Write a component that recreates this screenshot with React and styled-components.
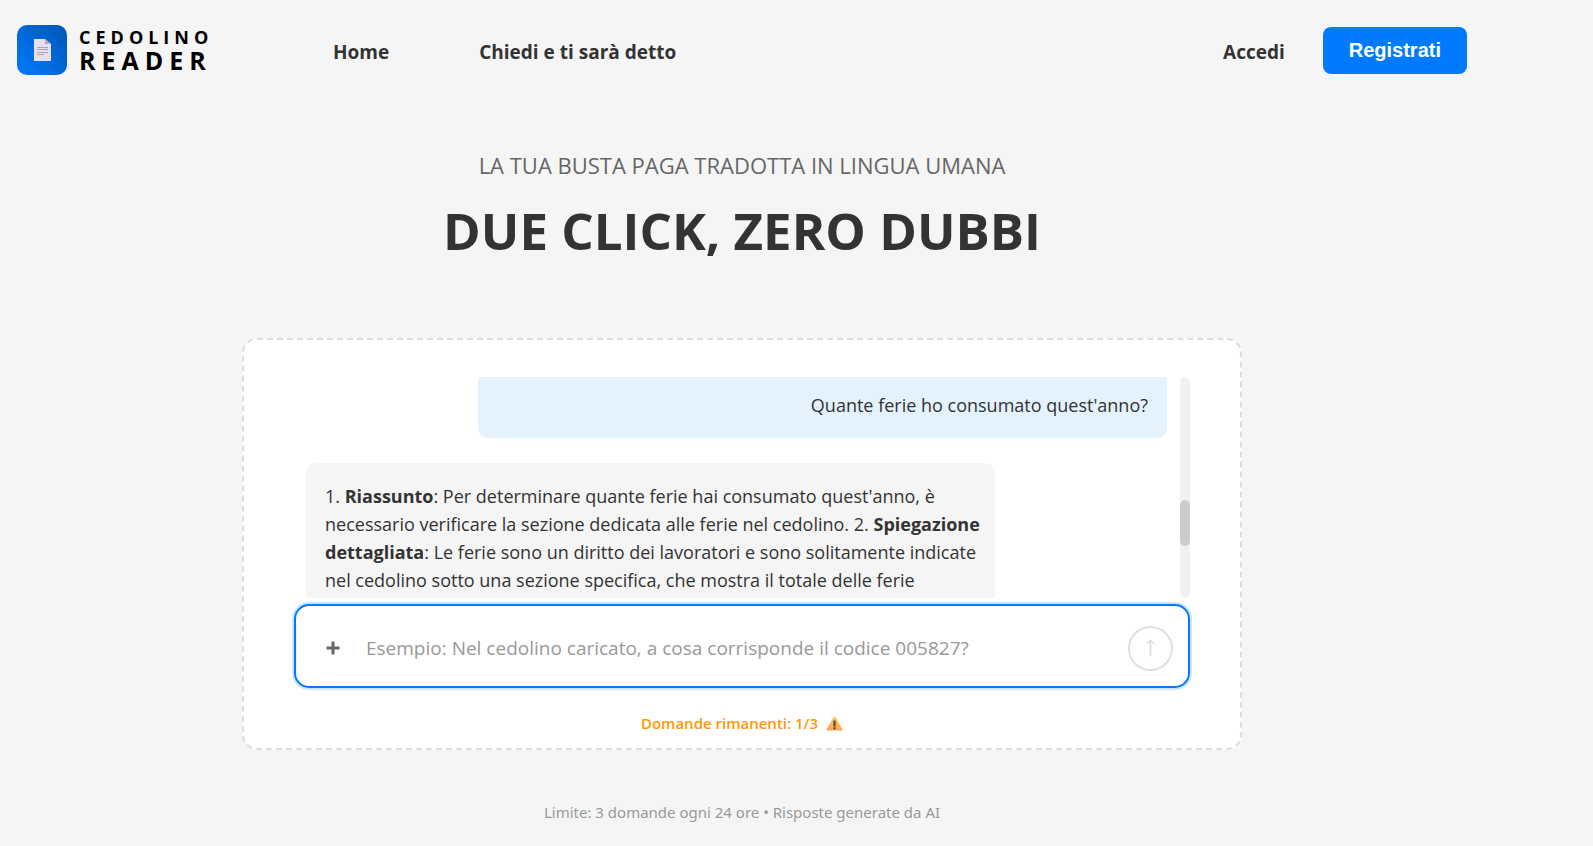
import React from "react";
import styled, { createGlobalStyle } from "styled-components";

const GlobalStyle = createGlobalStyle`
  *, *::before, *::after { box-sizing: border-box; }
  body {
    margin: 0;
    background: #f5f5f5;
    color: #333;
    font-family: "Segoe UI", "Open Sans", "Noto Sans", sans-serif;
  }
  button, input { font-family: inherit; }
`;

const Page = styled.div`
  min-height: 100vh;
  padding-right: 109px;
`;

const Header = styled.header`
  display: flex;
  align-items: center;
  padding: 25px 17px;
`;

const Brand = styled.a`
  display: flex;
  align-items: center;
  gap: 12px;
  width: 316px;
  color: #000;
  text-decoration: none;
`;

const BrandMark = styled.span`
  display: flex;
  align-items: center;
  justify-content: center;
  width: 50px;
  height: 50px;
  border-radius: 10px;
  background: linear-gradient(45deg, #007bff, #0056b3);
`;

const BrandName = styled.span`
  display: flex;
  flex-direction: column;
`;

const BrandTop = styled.span`
  font-size: 18px;
  line-height: 21px;
  font-weight: 700;
  letter-spacing: 5px;
`;

const BrandBottom = styled.span`
  font-size: 25px;
  line-height: 25px;
  font-weight: 700;
  letter-spacing: 6px;
`;

const Nav = styled.nav`
  display: flex;
  flex: 1;
  gap: 90px;
`;

const NavLink = styled.a`
  padding-top: 4px;
  color: #333;
  font-size: 19px;
  line-height: 28px;
  font-weight: 700;
  text-decoration: none;
`;

const Account = styled.div`
  display: flex;
  align-items: center;
  gap: 38px;
`;

const RegisterButton = styled.button`
  height: 47px;
  padding: 0 26px;
  border: 0;
  border-radius: 8px;
  background: #007bff;
  color: #fff;
  font: 700 20px/44px "Liberation Sans", Arial, sans-serif;
`;

const Main = styled.main`
  display: flex;
  flex-direction: column;
  align-items: center;
  padding: 49px 17px 20px;
`;

const Subtitle = styled.p`
  margin: 0;
  color: #666;
  font-size: 22px;
  line-height: 32px;
  text-transform: uppercase;
`;

const Title = styled.h1`
  margin: 13px 0 72px;
  font-size: 51px;
  line-height: 72px;
  font-weight: 700;
`;

const Card = styled.section`
  width: 100%;
  max-width: 1000px;
  padding: 37px 50px 13px;
  border: 2px dashed #ddd;
  border-radius: 15px;
  background: #fff;
`;

const Chat = styled.div`
  display: flex;
  height: 221px;
  margin-bottom: 6px;
  overflow: hidden;
`;

const Messages = styled.div`
  display: flex;
  flex: 1;
  flex-direction: column;
  gap: 25px;
  margin-top: -5px;
  padding: 0 13px 0 12px;
`;

const Message = styled.div`
  flex: none;
  align-self: ${(p) => (p.$own ? "flex-end" : "flex-start")};
  width: 80%;
  padding: ${(p) => (p.$own ? "19px" : "19px 8px 19px 19px")};
  border-radius: 10px;
  background: ${(p) => (p.$own ? "#e3f2fd" : "#f5f5f5")};
  font-size: 18px;
  line-height: 28px;
  text-align: ${(p) => (p.$own ? "right" : "left")};
`;

const ScrollTrack = styled.div`
  width: 10px;
  padding-top: 123px;
  border-radius: 5px;
  background: #f1f1f1;
`;

const ScrollThumb = styled.div`
  height: 46px;
  border-radius: 5px;
  background: #ccc;
`;

const Composer = styled.form`
  display: flex;
  align-items: center;
  height: 84px;
  padding: 4px 15px 0;
  border: 2px solid #007bff;
  border-radius: 15px;
  background: #fff;
  box-shadow: 0 0 0 2px rgba(0, 123, 255, 0.2);
`;

const AttachButton = styled.button`
  display: flex;
  align-items: center;
  justify-content: center;
  width: 44px;
  height: 44px;
  padding: 0;
  border: 0;
  background: transparent;
`;

const Question = styled.input`
  flex: 1;
  min-width: 0;
  height: 44px;
  padding: 0 11px;
  border: 0;
  outline: 0;
  background: transparent;
  color: #333;
  font-size: 19px;
  &::placeholder { color: #999; opacity: 1; }
`;

const SendButton = styled.button`
  display: flex;
  align-items: center;
  justify-content: center;
  width: 45px;
  height: 45px;
  padding: 0;
  border: 2px solid #e0e0e0;
  border-radius: 50%;
  background: #fff;
`;

const Remaining = styled.p`
  display: flex;
  align-items: center;
  justify-content: center;
  gap: 8px;
  margin: 23px 0 0;
  color: #ff9800;
  font-size: 15px;
  line-height: 24px;
  font-weight: 600;
`;

const Footer = styled.footer`
  margin-top: 50px;
  color: #999;
  font-family: "Segoe UI", "Noto Sans", sans-serif;
  font-size: 15px;
  line-height: 24px;
`;

const DocumentIcon = () => (
  <svg width="17" height="22" viewBox="0 0 17 22" aria-hidden="true">
    <path d="M0 0h11l6 5v17H0z" fill="#e6dff0" />
    <path d="M11 0l6 5h-6z" fill="#b4acbe" />
    <path d="M3 8.5h11M3 10.5h11M3 13.5h11M3 15.5h7" stroke="#aaa3b5" strokeWidth="1" />
  </svg>
);

const PlusIcon = () => (
  <svg width="14" height="14" viewBox="0 0 14 14" aria-hidden="true">
    <path d="M7 0.5v13M0.5 7h13" stroke="#666" strokeWidth="3" />
  </svg>
);

const ArrowUpIcon = () => (
  <svg width="9" height="18" viewBox="0 0 9 18" aria-hidden="true">
    <path d="M4.5 17.5V1.5M0.8 4.6L4.5 1.4l3.7 3.2" stroke="#e0e0e0" strokeWidth="1.8" fill="none" />
  </svg>
);

const WarningIcon = () => (
  <svg width="17" height="15" viewBox="0 0 17 15" aria-hidden="true">
    <defs>
      <linearGradient id="warning" x1="0" y1="0" x2="0" y2="1">
        <stop offset="0" stopColor="#fcc850" />
        <stop offset="1" stopColor="#ffa257" />
      </linearGradient>
    </defs>
    <path d="M8.5 0.4c.4 0 .7.2.9.6l7.1 12.4c.3.6 0 1.2-.7 1.2H1.2c-.7 0-1-.6-.7-1.2L7.6 1c.2-.4.5-.6.9-.6z" fill="url(#warning)" />
    <path d="M7.4 4.5h2.2v6H7.4zM7.4 11.3h2.2v2H7.4z" fill="#55484f" />
  </svg>
);

export default function App() {
  return (
    <>
      <GlobalStyle />
      <Page>
        <Header>
          <Brand href="#">
            <BrandMark><DocumentIcon /></BrandMark>
            <BrandName>
              <BrandTop>CEDOLINO</BrandTop>
              <BrandBottom>READER</BrandBottom>
            </BrandName>
          </Brand>
          <Nav>
            <NavLink href="#">Home</NavLink>
            <NavLink href="#">Chiedi e ti sarà detto</NavLink>
          </Nav>
          <Account>
            <NavLink href="#">Accedi</NavLink>
            <RegisterButton type="button">Registrati</RegisterButton>
          </Account>
        </Header>
        <Main>
          <Subtitle>La tua busta paga tradotta in lingua umana</Subtitle>
          <Title>DUE CLICK, ZERO DUBBI</Title>
          <Card>
            <Chat>
              <Messages>
                <Message $own>Quante ferie ho consumato quest'anno?</Message>
                <Message>
                  1. <strong>Riassunto</strong>: Per determinare quante ferie hai consumato quest'anno, è
                  necessario verificare la sezione dedicata alle ferie nel cedolino. 2.{" "}
                  <strong>Spiegazione dettagliata</strong>: Le ferie sono un diritto dei lavoratori e sono
                  solitamente indicate nel cedolino sotto una sezione specifica, che mostra il totale delle ferie
                </Message>
              </Messages>
              <ScrollTrack><ScrollThumb /></ScrollTrack>
            </Chat>
            <Composer onSubmit={(e) => e.preventDefault()}>
              <AttachButton type="button" aria-label="Allega cedolino"><PlusIcon /></AttachButton>
              <Question
                type="text"
                aria-label="Domanda"
                placeholder="Esempio: Nel cedolino caricato, a cosa corrisponde il codice 005827?"
              />
              <SendButton type="submit" aria-label="Invia"><ArrowUpIcon /></SendButton>
            </Composer>
            <Remaining>Domande rimanenti: 1/3 <WarningIcon /></Remaining>
          </Card>
          <Footer>Limite: 3 domande ogni 24 ore • Risposte generate da AI</Footer>
        </Main>
      </Page>
    </>
  );
}
